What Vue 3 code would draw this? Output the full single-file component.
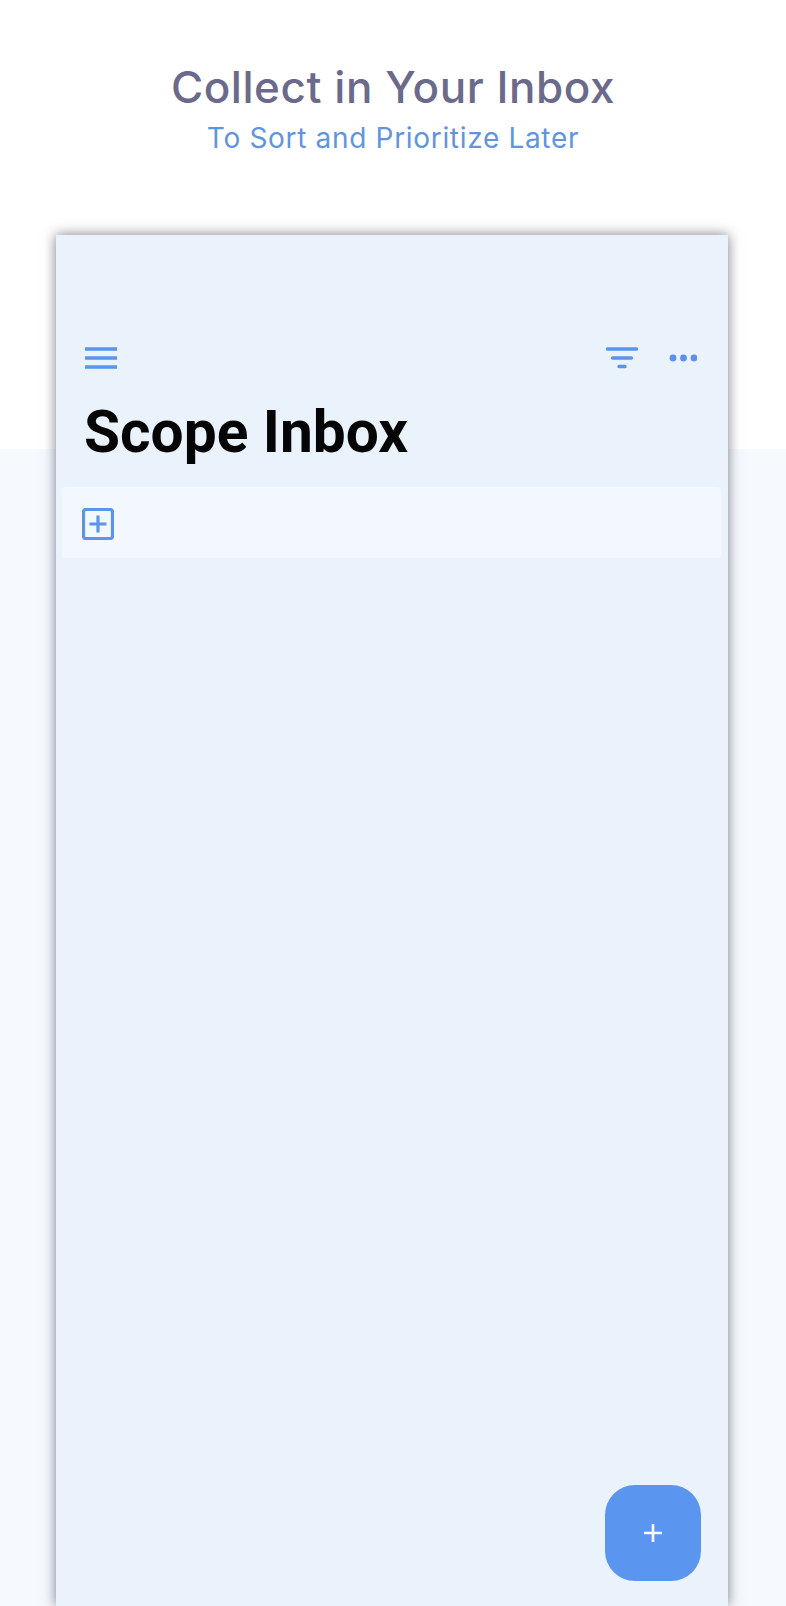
<template>
  <div class="page">
    <header class="hero">
      <h1 class="hero-title">Collect in Your Inbox</h1>
      <p class="hero-sub">To Sort and Prioritize Later</p>
    </header>

    <section class="phone">
      <div class="toolbar">
        <svg class="icon-menu" width="32" height="22" viewBox="0 0 32 22">
          <path d="M0 2H32M0 11H32M0 20H32" stroke="#5b94e8" stroke-width="3.4" fill="none" />
        </svg>
        <div class="toolbar-right">
          <svg class="icon-filter" width="32" height="22" viewBox="0 0 32 22">
            <path d="M1.5 2H30.5M6.5 11H25.5M13 19.5H19" stroke="#5b94e8" stroke-width="3.4" stroke-linecap="round" fill="none" />
          </svg>
          <svg class="icon-more" width="28" height="8" viewBox="0 0 28 8">
            <circle v-for="x in dots" :key="x" :cx="x" cy="4" r="3.4" fill="#5b8ff0" />
          </svg>
        </div>
      </div>

      <h2 class="inbox-title">Scope Inbox</h2>

      <div class="add-row">
        <svg width="32" height="32" viewBox="0 0 32 32">
          <rect x="1.5" y="1.5" width="29" height="29" rx="2.5" stroke="#5b94e8" stroke-width="3.2" fill="none" />
          <path d="M16 7.5V24.5M7.5 16H24.5" stroke="#5b94e8" stroke-width="3.2" fill="none" />
        </svg>
      </div>

      <button class="fab" aria-label="Add">
        <svg width="20" height="20" viewBox="0 0 20 20">
          <path d="M10 1V19M1 10H19" stroke="#ffffff" stroke-width="2.6" fill="none" />
        </svg>
      </button>
    </section>
  </div>
</template>

<script setup>
const dots = [4, 14.5, 25]
</script>

<style scoped>
.page {
  height: 1606px;
  width: 786px;
  overflow: hidden;
  box-sizing: border-box;
  padding-top: 61px;
  background: linear-gradient(#ffffff 449px, #f6faff 449px);
}

.hero {
  text-align: center;
  height: 174px;
}

.hero-title {
  margin: 0;
  font-family: "Inter", "Liberation Sans", sans-serif;
  font-size: 44px;
  line-height: 52px;
  font-weight: 450;
  letter-spacing: 0.55px;
  color: #6b6a8a;
}

.hero-sub {
  margin: 8px 0 0;
  font-family: "Inter", "Liberation Sans", sans-serif;
  font-size: 28px;
  line-height: 34px;
  font-weight: 400;
  letter-spacing: 0.68px;
  color: #5f95de;
}

.phone {
  position: relative;
  box-sizing: border-box;
  width: 672px;
  height: 1371px;
  margin-left: 56px;
  padding: 112px 7px 0 6px;
  background: #eaf2fc;
  box-shadow: 0 0 12px rgba(40, 40, 60, 0.62);
}

.toolbar {
  display: flex;
  align-items: center;
  justify-content: space-between;
  padding: 0 24px 0 23px;
  height: 22px;
}

.toolbar-right {
  display: flex;
  align-items: center;
  gap: 31px;
}

.inbox-title {
  margin: 28px 0 0 22px;
  font-family: "Roboto", "Liberation Sans", sans-serif;
  font-size: 58.6px;
  line-height: 70px;
  font-weight: 700;
  color: #050505;
}

.add-row {
  display: flex;
  align-items: center;
  height: 71px;
  margin-top: 20px;
  padding: 2px 0 0 20px;
  box-sizing: border-box;
  border-radius: 4px;
  background: #f3f7fe;
}

.fab {
  position: absolute;
  right: 27px;
  bottom: 25px;
  display: flex;
  align-items: center;
  justify-content: center;
  width: 96px;
  height: 96px;
  padding: 0;
  border: none;
  border-radius: 30px;
  background: #5a96ef;
}
</style>

<style>
body {
  background: #ffffff;
}
</style>
